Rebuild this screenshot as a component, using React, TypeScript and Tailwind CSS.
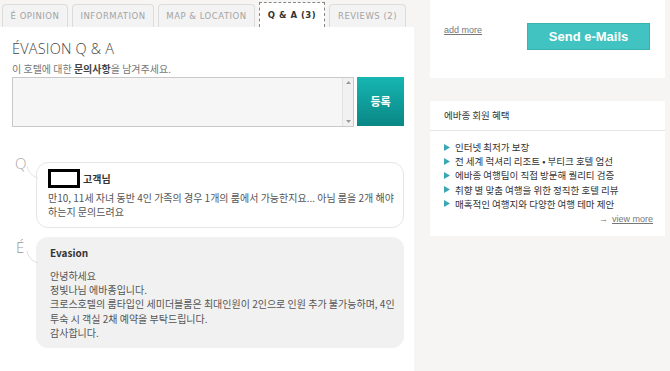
import React from "react";

const kr = { fontFamily: "'Noto Sans CJK KR', sans-serif" };

function Tab({ label, w, active }: { label: string; w: string; active?: boolean }) {
  if (active) {
    return (
      <div
        className={`${w} h-[25px] bg-white border border-dashed border-[#888] border-b-0 flex items-center justify-center text-[8.5px] font-bold text-[#333] tracking-[0.5px]`}
        style={{ fontFamily: "'DejaVu Sans', sans-serif" }}
      >
        {label}
      </div>
    );
  }
  return (
    <div
      className={`${w} h-[23px] mt-[2px] bg-[#f3f3f3] border border-[#dcdcdc] border-b-0 rounded-t-[4px] flex items-center justify-center text-[8.5px] text-[#a3a3a3] tracking-[0.5px]`}
      style={{ fontFamily: "'DejaVu Sans', sans-serif" }}
    >
      {label}
    </div>
  );
}

export default function App() {
  return (
    <div className="w-[670px] h-[371px] overflow-hidden bg-[#f6f5f3] flex" style={kr}>
      {/* Left column */}
      <div className="w-[414px] flex flex-col">
        <div className="h-[27px] flex items-end gap-[4px] pl-[2px] pt-[2px]">
          <Tab label="É OPINION" w="w-[66px]" />
          <Tab label="INFORMATION" w="w-[82px]" />
          <Tab label="MAP & LOCATION" w="w-[97px]" />
          <Tab label="Q & A (3)" w="w-[66px]" active />
          <Tab label="REVIEWS (2)" w="w-[77px]" />
        </div>
        <div className="flex-1 bg-white pl-[12px] pr-[10px] pt-[12px]">
          <div
            className="text-[14.5px] leading-[20px] text-[#444] font-light tracking-[0.2px]"
            style={{ fontFamily: "'Open Sans', sans-serif" }}
          >
            ÉVASION Q &amp; A
          </div>
          <div className="mt-[3px] text-[10px] leading-[14px] text-[#777] break-keep">
            이 호텔에 대한 <span className="font-bold text-[#444]">문의사항</span>을 남겨주세요.
          </div>
          <div className="mt-[1px] flex gap-[3px]">
            <div className="w-[342px] h-[50px] border border-[#c9c9c9] bg-[#f6f6f6] flex justify-end">
              <div className="w-[11px] h-full bg-[#f1f1f1] border-l border-[#e2e2e2] flex flex-col items-center justify-between py-[3px]">
                <svg width="5" height="3" viewBox="0 0 5 3">
                  <path d="M0 3 L2.5 0 L5 3 Z" fill="#999" />
                </svg>
                <svg width="5" height="3" viewBox="0 0 5 3">
                  <path d="M0 0 L2.5 3 L5 0 Z" fill="#999" />
                </svg>
              </div>
            </div>
            <div className="w-[47px] h-[49px] bg-gradient-to-b from-[#16b6b2] to-[#0a8785] flex items-center justify-center text-white text-[11px] font-bold">
              등록
            </div>
          </div>

          {/* Q */}
          <div className="mt-[35px] flex">
            <div className="w-[24px] relative">
              <div
                className="absolute left-[3px] top-[-10px] text-[15px] text-[#aaa] font-light"
                style={{ fontFamily: "'Open Sans', sans-serif" }}
              >
                Q
              </div>
              <svg className="absolute left-[14px] top-[4px]" width="12" height="14" viewBox="0 0 12 14">
                <path d="M1 0 C2 6 6 10 12 12" fill="none" stroke="#e4e4e4" strokeWidth="1" />
              </svg>
            </div>
            <div className="w-[368px] h-[66px] border border-[#e6e6e6] rounded-[12px] bg-white pl-[11px] pr-[6px] pt-[6px]">
              <div className="flex items-center gap-[3px]">
                <div className="w-[32px] h-[19px] border-[3px] border-black bg-white" />
                <span className="text-[10px] font-bold text-[#333]">고객님</span>
              </div>
              <div className="mt-[3px] text-[10px] leading-[14px] text-[#555] break-keep">
                만10, 11세 자녀 동반 4인 가족의 경우 1개의 룸에서 가능한지요... 아님 룸을 2개 해야 하는지 문의드려요
              </div>
            </div>
          </div>

          {/* É */}
          <div className="mt-[9px] flex">
            <div className="w-[24px] relative">
              <div
                className="absolute left-[4px] top-[-1px] text-[15px] text-[#999] font-light"
                style={{ fontFamily: "'Open Sans', sans-serif" }}
              >
                É
              </div>
              <svg className="absolute left-[14px] top-[14px]" width="12" height="14" viewBox="0 0 12 14">
                <path d="M1 0 C2 6 6 10 12 12" fill="none" stroke="#dedede" strokeWidth="1" />
              </svg>
            </div>
            <div className="w-[368px] h-[111px] rounded-[12px] bg-[#f1f1f1] pl-[14px] pr-[6px] pt-[9px]">
              <div className="text-[10px] font-bold text-[#333] leading-[14px]">Evasion</div>
              <div className="mt-[9px] text-[10px] leading-[14.2px] text-[#555] break-keep">
                안녕하세요
                <br />
                정빛나님 에바종입니다.
                <br />
                크로스호텔의 룸타입인 세미더블룸은 최대인원이 2인으로 인원 추가 불가능하며, 4인 투숙 시 객실 2채 예약을 부탁드립니다.
                <br />
                감사합니다.
              </div>
            </div>
          </div>
        </div>
      </div>

      {/* Right column */}
      <div className="ml-[16px] w-[235px] flex flex-col gap-[23px]">
        <div className="h-[78px] bg-white flex items-start pt-[23px] pl-[14px]">
          <a className="mt-[1px] text-[9px] text-[#777] underline" style={{ fontFamily: "'Liberation Sans', sans-serif" }}>
            add more
          </a>
          <div
            className="ml-[45px] w-[123px] h-[27px] bg-[#41c4c1] border border-[#39b3b0] flex items-center justify-center text-white text-[13px] font-bold"
            style={{ fontFamily: "'Liberation Sans', sans-serif" }}
          >
            Send e-Mails
          </div>
        </div>
        <div className="h-[135px] bg-white">
          <div className="h-[30px] border-b border-[#e6e6e6] pl-[14px] flex items-center text-[9.5px] text-[#333]">
            에바종 회원 혜택
          </div>
          <div className="pl-[14px] pt-[9px] flex flex-col">
            {[
              "인터넷 최저가 보장",
              "전 세계 럭셔리 리조트 • 부티크 호텔 엄선",
              "에바종 여행팀이 직접 방문해 퀄리티 검증",
              "취향 별 맞춤 여행을 위한 정직한 호텔 리뷰",
              "매혹적인 여행지와 다양한 여행 테마 제안",
            ].map((t) => (
              <div key={t} className="flex items-center h-[14.2px] text-[9.5px] text-[#333]">
                <svg width="6" height="7" viewBox="0 0 6 7" className="mr-[5px]">
                  <path d="M0 0 L6 3.5 L0 7 Z" fill="#3aa7b5" />
                </svg>
                {t}
              </div>
            ))}
            <div className="flex justify-end pr-[12px] mt-[2px] text-[9px] text-[#777]" style={{ fontFamily: "'Liberation Sans', sans-serif" }}>
              <span className="mr-[4px]">→</span>
              <span className="underline">view more</span>
            </div>
          </div>
        </div>
      </div>
    </div>
  );
}
